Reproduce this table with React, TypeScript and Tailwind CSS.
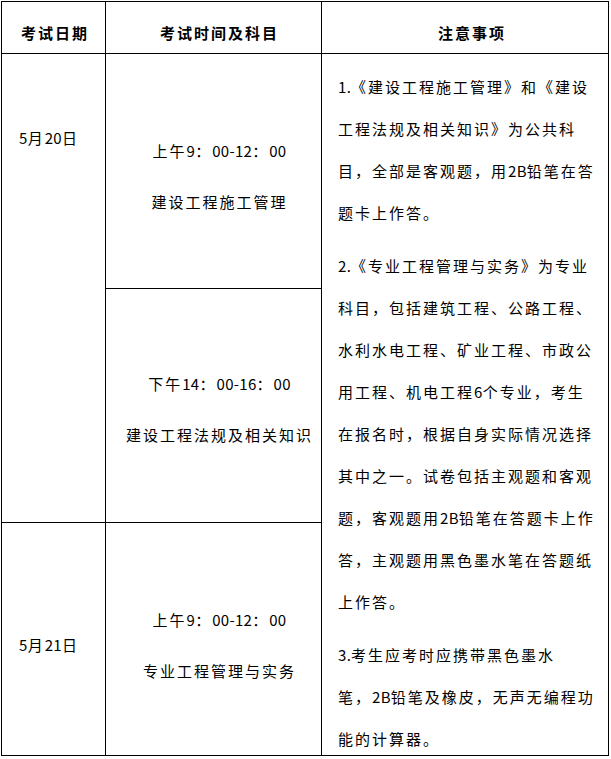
import React from "react";

const notes: string[][] = [
  [
    "1.《建设工程施工管理》和《建设",
    "工程法规及相关知识》为公共科",
    "目，全部是客观题，用2B铅笔在答",
    "题卡上作答。",
  ],
  [
    "2.《专业工程管理与实务》为专业",
    "科目，包括建筑工程、公路工程、",
    "水利水电工程、矿业工程、市政公",
    "用工程、机电工程6个专业，考生",
    "在报名时，根据自身实际情况选择",
    "其中之一。试卷包括主观题和客观",
    "题，客观题用2B铅笔在答题卡上作",
    "答，主观题用黑色墨水笔在答题纸",
    "上作答。",
  ],
  [
    "3.考生应考时应携带黑色墨水",
    "笔，2B铅笔及橡皮，无声无编程功",
    "能的计算器。",
  ],
];

// half-width runs (digits, latin) get tighter tracking, like the original's SimSun
const Txt = ({ s }: { s: string }) => (
  <>
    {s.split(/([\x20-\x7e]+)/).map((part, i) =>
      /^[\x20-\x7e]+$/.test(part) ? (
        <span key={i} className="tracking-[0.3px]">
          {part}
        </span>
      ) : (
        part
      )
    )}
  </>
);

const Session = ({ time, subject, top }: { time: string; subject: string; top: string }) => (
  <div className={`flex flex-col items-center gap-[9px] pl-[12px] ${top}`}>
    <div className="leading-[42px] whitespace-nowrap">
      <Txt s={time} />
    </div>
    <div className="leading-[42px] whitespace-nowrap">{subject}</div>
  </div>
);

export default function App() {
  return (
    <div className="w-[611px] h-[759px] bg-white pt-[1px] pl-[1px] font-['Noto_Sans_CJK_SC',sans-serif] text-[15px] tracking-[2px] text-black">
      <div className="grid grid-cols-[104px_216px_287px] grid-rows-[52px_235px_234px_233px] w-[608px] h-[755px] border-l border-t border-black">
        {/* header */}
        <div className="col-start-1 row-start-1 border-r border-b border-black pt-[10px] pl-[3px] text-center font-bold leading-[42px]">
          考试日期
        </div>
        <div className="col-start-2 row-start-1 border-r border-b border-black pt-[10px] pl-[12px] text-center font-bold leading-[42px]">
          考试时间及科目
        </div>
        <div className="col-start-3 row-start-1 border-r border-b border-black pt-[10px] pl-[14px] text-center font-bold leading-[42px]">
          注意事项
        </div>

        {/* dates */}
        <div className="col-start-1 row-start-2 row-span-2 border-r border-b border-black pt-[63px] pl-[17px] leading-[42px]">
          <Txt s="5月20日" />
        </div>
        <div className="col-start-1 row-start-4 border-r border-b border-black pt-[101px] pl-[17px] leading-[42px]">
          <Txt s="5月21日" />
        </div>

        {/* sessions */}
        <div className="col-start-2 row-start-2 border-r border-b border-black">
          <Session time="上午9：00-12：00" subject="建设工程施工管理" top="pt-[76px]" />
        </div>
        <div className="col-start-2 row-start-3 border-r border-b border-black">
          <Session time="下午14：00-16：00" subject="建设工程法规及相关知识" top="pt-[74px]" />
        </div>
        <div className="col-start-2 row-start-4 border-r border-b border-black">
          <Session time="上午9：00-12：00" subject="专业工程管理与实务" top="pt-[76px]" />
        </div>

        {/* notes */}
        <div className="col-start-3 row-start-2 row-span-3 border-r border-b border-black pt-[12px] pl-[16px]">
          {notes.map((para, i) => (
            <p key={i} className={`leading-[42px] ${i > 0 ? "mt-[11px]" : ""}`}>
              {para.map((line, j) => (
                <span key={j} className="block whitespace-nowrap">
                  <Txt s={line} />
                </span>
              ))}
            </p>
          ))}
        </div>
      </div>
    </div>
  );
}
